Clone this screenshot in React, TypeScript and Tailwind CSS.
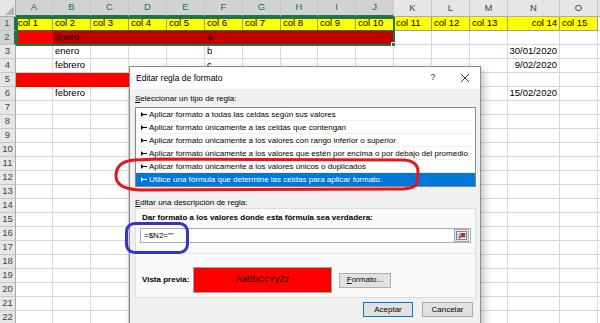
const cols = [
  { l: "A", w: "w-[37px]" },
  { l: "B", w: "w-[38px]" },
  { l: "C", w: "w-[38px]" },
  { l: "D", w: "w-[38px]" },
  { l: "E", w: "w-[38px]" },
  { l: "F", w: "w-[38px]" },
  { l: "G", w: "w-[38px]" },
  { l: "H", w: "w-[37px]" },
  { l: "I", w: "w-[38px]" },
  { l: "J", w: "w-[38px]" },
  { l: "K", w: "w-[38px]" },
  { l: "L", w: "w-[38px]" },
  { l: "M", w: "w-[38px]" },
  { l: "N", w: "w-[52px]" },
  { l: "O", w: "w-[38px]" },
  { l: "P", w: "w-[38px]" },
];

const data: Record<number, Record<string, string>> = {
  2: { B: "enero", F: "a" },
  3: { B: "enero", F: "b", N: "30/01/2020" },
  4: { B: "febrero", F: "c", N: "9/02/2020" },
  6: { B: "febrero", N: "15/02/2020" },
};

const reglas = [
  "Aplicar formato a todas las celdas según sus valores",
  "Aplicar formato únicamente a las celdas que contengan",
  "Aplicar formato únicamente a los valores con rango inferior o superior",
  "Aplicar formato únicamente a los valores que estén por encima o por debajo del promedio",
  "Aplicar formato únicamente a los valores únicos o duplicados",
  "Utilice una fórmula que determine las celdas para aplicar formato.",
];

const rows = Array.from({ length: 22 }, (_, i) => i + 1);

function cellClass(r: number, i: number) {
  if (r === 1 && i < 15) return "bg-[#ffff00] border-[#9c9c9c]";
  if (r === 2 && i === 0) return "bg-[#ff0000] border-[#ff0000]";
  if (r === 2 && i < 10) return "bg-[#c00000] border-[#c00000]";
  if (r === 5 && i < 10) return "bg-[#ff0000] border-[#ff0000]";
  return "bg-white border-[#d9d9d9]";
}

function ReglaIcon({ white }: { white: boolean }) {
  return (
    <svg width="6" height="5" viewBox="0 0 6 5" className="shrink-0">
      <path d="M0 0 L2.6 2.5 L0 5 Z" fill={white ? "#fff" : "#000"} />
      <rect x="1.5" y="2" width="4.5" height="1" fill={white ? "#fff" : "#000"} />
    </svg>
  );
}

function Dialogo() {
  return (
    <div className="absolute left-[129px] top-[66px] flex h-[270px] w-[352px] flex-col border border-[#8c8c8c] bg-[#f0f0f0] text-[8px] text-black shadow-[3px_3px_8px_rgba(0,0,0,0.25)]">
      <div className="flex h-[22px] shrink-0 items-center bg-white pl-[6px]">
        <span className="text-[8.5px]">Editar regla de formato</span>
        <span className="ml-auto w-[10px] text-center text-[9px] text-[#333]">?</span>
        <svg width="10" height="10" viewBox="0 0 10 10" className="ml-[22px] mr-[10px]">
          <path d="M1 1 L9 9 M9 1 L1 9" stroke="#333" strokeWidth="1" />
        </svg>
      </div>

      <div className="flex flex-col pl-[5px] pr-[4px]">
        <div className="mt-[5px] h-[10px] leading-[10px]">
          <span className="underline">S</span>eleccionar un tipo de regla:
        </div>

        <div className="mt-[3px] flex flex-col border border-[#828790] bg-white">
          {reglas.map((t, i) => {
            const sel = i === reglas.length - 1;
            return (
              <div
                key={t}
                className={
                  sel
                    ? "flex h-[13px] items-center gap-[2px] whitespace-nowrap bg-[#0078d7] pl-[5px] leading-[13px] text-white"
                    : "flex h-[13px] items-center gap-[2px] whitespace-nowrap border-b border-[#f0f0f0] pl-[5px] leading-[13px]"
                }
              >
                <ReglaIcon white={sel} />
                <span>{t}</span>
              </div>
            );
          })}
        </div>

        <div className="mt-[11px] h-[10px] leading-[10px]">
          <span className="underline">E</span>ditar una descripción de regla:
        </div>

        <div className="flex h-[90px] flex-col border border-[#dcdcdc] bg-[#fafafa]">
          <div className="mt-[4px] h-[10px] pl-[6px] font-bold leading-[10px]">
            Dar formato a los valores donde esta fórmula sea verdadera:
          </div>
          <div className="mx-[4px] mt-[5px] flex h-[15px] items-center border border-[#abadb3] bg-white pl-[3px]">
            <span>=$N2=""</span>
            <div className="ml-auto mr-[1px] flex h-[13px] w-[15px] items-center justify-center border border-[#a9a9a9] bg-[#e6e6e6]">
              <svg width="11" height="9" viewBox="0 0 11 9">
                <rect x="0.5" y="0.5" width="10" height="8" fill="#eef3fa" stroke="#6b86b3" />
                <path d="M1 3.5 H10 M1 6 H10 M4 1 V8" stroke="#8fa8cf" strokeWidth="1" />
                <rect x="5" y="2" width="4" height="4" fill="#e0201c" />
                <path d="M3 7 L6 4" stroke="#e0201c" strokeWidth="1.2" />
              </svg>
            </div>
          </div>
          <div className="mt-[10px] h-px bg-[#e3e3e3]" />
          <div className="mt-[13px] flex h-[26px] items-center pl-[6px]">
            <span className="w-[51px] font-bold">Vista previa:</span>
            <div className="flex h-[26px] w-[139px] items-center justify-center border border-[#a0a0a0] bg-[#ff0000] text-[9px] text-[#1a0000]">
              AaBbCcYyZz
            </div>
            <div className="ml-[7px] flex h-[15px] w-[52px] items-center justify-center border border-[#adadad] bg-[#e1e1e1]">
              <span>
                <span className="underline">F</span>ormato...
              </span>
            </div>
          </div>
        </div>

        <div className="mt-[4px] flex justify-end gap-[9px] pr-[3px]">
          <div className="flex h-[15px] w-[50px] items-center justify-center border border-[#0078d7] bg-[#e1e1e1]">
            Aceptar
          </div>
          <div className="flex h-[15px] w-[51px] items-center justify-center border border-[#adadad] bg-[#e1e1e1]">
            Cancelar
          </div>
        </div>
      </div>
    </div>
  );
}

export default function App() {
  return (
    <div className="relative h-[323px] w-[600px] overflow-hidden bg-white font-['Liberation_Sans',Arial,sans-serif] text-[9.5px] text-black">
      <div className="flex h-[17px]">
        <div className="flex w-[16px] shrink-0 items-end justify-end border-b border-r border-[#ababab] bg-[#e6e6e6] p-[1px]">
          <svg width="9" height="9" viewBox="0 0 9 9">
            <path d="M9 0 L9 9 L0 9 Z" fill="#b4b4b4" />
          </svg>
        </div>
        {cols.map((c, i) => (
          <div
            key={c.l}
            className={
              i < 10
                ? `${c.w} flex shrink-0 items-center justify-center border-b-2 border-r border-b-[#217346] border-r-[#c6c6c6] bg-[#d2d2d2] text-[#217346]`
                : `${c.w} flex shrink-0 items-center justify-center border-b border-r border-b-[#ababab] border-r-[#c6c6c6] bg-[#e6e6e6] text-[#444]`
            }
          >
            {c.l === "P" ? "" : c.l}
          </div>
        ))}
      </div>

      {rows.map((r) => (
        <div key={r} className="flex h-[14px]">
          <div
            className={
              r <= 2
                ? "flex w-[16px] shrink-0 items-center justify-center border-b border-r-2 border-b-[#c6c6c6] border-r-[#217346] bg-[#d2d2d2] text-[#217346]"
                : "flex w-[16px] shrink-0 items-center justify-center border-b border-r border-b-[#c6c6c6] border-r-[#ababab] bg-[#e6e6e6] text-[#444]"
            }
          >
            {r}
          </div>
          {cols.map((c, i) => {
            const txt = r === 1 && i < 15 ? `col ${i + 1}` : data[r]?.[c.l] ?? "";
            return (
              <div
                key={c.l}
                className={`${c.w} ${cellClass(r, i)} flex shrink-0 items-center overflow-visible whitespace-nowrap border-b border-r ${
                  c.l === "N" ? "justify-end pr-[2px]" : "pl-[2px]"
                }`}
              >
                {txt}
              </div>
            );
          })}
        </div>
      ))}

      {/* selección A1:J2 */}
      <div className="pointer-events-none absolute left-[16px] top-[17px] h-[29px] w-[379px] border-2 border-[#217346]" />
      <div className="pointer-events-none absolute left-[16px] top-[30px] h-px w-[378px] bg-[#217346]" />
      <div className="pointer-events-none absolute left-[391px] top-[42px] h-[5px] w-[5px] border border-white bg-[#217346]" />

      <Dialogo />

      <svg className="pointer-events-none absolute inset-0" width="600" height="323" viewBox="0 0 600 323">
        <path
          d="M160 159 L404 160 Q418 161 418 172 L417 182 Q416 189 400 189 L140 190 Q116 189 116 176 Q116 161 135 160 Z"
          fill="none"
          stroke="#e8141c"
          strokeWidth="3"
        />
        <rect x="126.5" y="223.5" width="61" height="29" rx="8" fill="none" stroke="#3535c0" strokeWidth="3" />
      </svg>
    </div>
  );
}
